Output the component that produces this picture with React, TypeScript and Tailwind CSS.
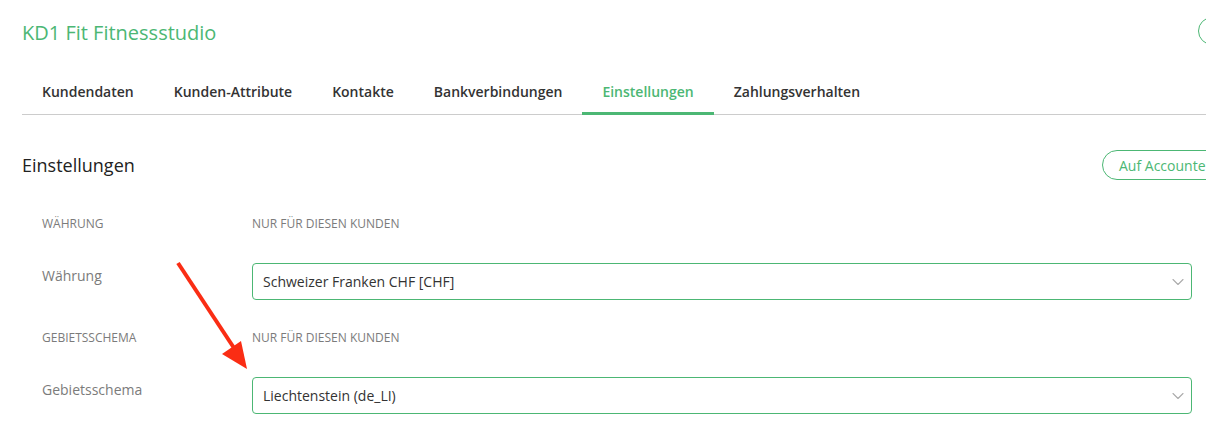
import { ChevronDown } from 'lucide-react'

const tabs = ['Kundendaten', 'Kunden-Attribute', 'Kontakte', 'Bankverbindungen', 'Einstellungen', 'Zahlungsverhalten']

interface SettingRowProps {
  section: string
  label: string
  value: string
}

function SettingRow({ section, label, value }: SettingRowProps) {
  return (
    <div>
      <div className="grid grid-cols-[210px_1fr] text-[12px] leading-5 uppercase text-[#7b7b7b]">
        <span>{section}</span>
        <span>Nur für diesen Kunden</span>
      </div>
      <div className="mt-[29px] grid grid-cols-[210px_1fr]">
        <span className="pt-[3px] text-[14px] leading-5 text-[#7b7b7b]">{label}</span>
        <div className="flex h-[37px] items-center justify-between rounded-[4px] border border-[#4cb774] pl-[10px] pr-[3px] text-[14px] text-[#333]">
          <span>{value}</span>
          <ChevronDown className="h-5 w-5 text-[#ababab]" strokeWidth={1.3} />
        </div>
      </div>
    </div>
  )
}

export default function App() {
  return (
    <div className="relative h-[442px] w-[1206px] overflow-hidden bg-white font-['Open_Sans',sans-serif]">
      <div className="pl-[22px] pt-[19px]">
        <div className="flex h-[28px] items-center">
          <h1 className="flex-1 text-[20px] leading-7 font-medium text-[#4cb774]">KD1 Fit Fitnessstudio</h1>
          <div className="w-[8px] shrink-0">
            <button className="h-[28px] w-[120px] rounded-full border border-[#4cb774] text-[14px] text-[#4cb774]" />
          </div>
        </div>

        <nav className="mt-[35px] flex border-b border-[#cccccc]">
          {tabs.map((tab) => (
            <div
              key={tab}
              className={`-mb-px border-b-[3px] px-5 pb-[10px] text-[14px] leading-5 font-semibold ${
                tab === 'Einstellungen' ? 'border-[#4cb774] text-[#4cb774]' : 'border-transparent text-[#333]'
              }`}
            >
              {tab}
            </div>
          ))}
        </nav>

        <div className="mt-[35px] flex h-[30px] items-center">
          <h2 className="flex-1 text-[18px] leading-7 text-[#222]">Einstellungen</h2>
          <div className="w-[104px] shrink-0">
            <button className="h-[30px] whitespace-nowrap rounded-full border border-[#4cb774] px-4 text-[14px] text-[#4cb774]">
              Auf Accountebene zurücksetzen
            </button>
          </div>
        </div>

        <div className="flex flex-col gap-[28px] pl-5 pr-[14px] pt-[34px]">
          <SettingRow section="Währung" label="Währung" value="Schweizer Franken CHF [CHF]" />
          <SettingRow section="Gebietsschema" label="Gebietsschema" value="Liechtenstein (de_LI)" />
        </div>
      </div>

      <svg className="pointer-events-none absolute left-0 top-0" width="1206" height="442">
        <line x1="178" y1="263" x2="234" y2="348" stroke="#fa2d14" strokeWidth="4" />
        <polygon points="247,369 222,354 241,341" fill="#fa2d14" />
      </svg>
    </div>
  )
}
